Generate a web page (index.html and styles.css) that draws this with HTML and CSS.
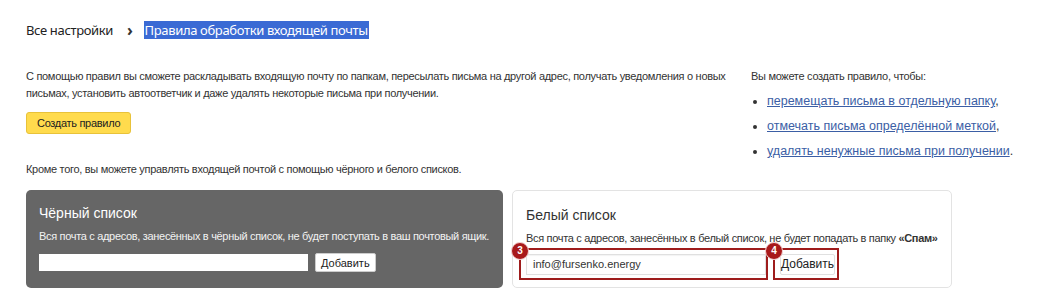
FILE: index.html
```html
<!DOCTYPE html>
<html lang="ru">
<head>
    <meta charset="UTF-8">
    <title>Правила обработки входящей почты</title>
    <link rel="stylesheet" href="styles.css">
</head>
<body>
    <div class="page">
        <div class="crumbs">
            <span class="crumb">Все настройки</span>
            <span class="crumb-sep">›</span>
            <span class="crumb-current">Правила обработки входящей почты</span>
        </div>

        <div class="intro">
            <div class="intro-main">
                <p class="text">С помощью правил вы сможете раскладывать входящую почту по папкам, пересылать письма на другой адрес, получать уведомления о новых письмах, установить автоответчик и даже удалять некоторые письма при получении.</p>
                <button class="create-btn">Создать правило</button>
                <p class="text lists-note">Кроме того, вы можете управлять входящей почтой с помощью чёрного и белого списков.</p>
            </div>
            <div class="intro-side">
                <p class="text">Вы можете создать правило, чтобы:</p>
                <ul class="rule-list">
                    <li><a href="#">перемещать письма в отдельную папку</a>,</li>
                    <li><a href="#">отмечать письма определённой меткой</a>,</li>
                    <li><a href="#">удалять ненужные письма при получении</a>.</li>
                </ul>
            </div>
        </div>

        <div class="lists">
            <div class="list-box black">
                <h2 class="list-title">Чёрный список</h2>
                <p class="list-desc">Вся почта с адресов, занесённых в чёрный список, не будет поступать в ваш почтовый ящик.</p>
                <div class="list-form">
                    <input class="list-input black-input" type="text">
                    <button class="add-btn">Добавить</button>
                </div>
            </div>
            <div class="list-box white">
                <h2 class="list-title">Белый список</h2>
                <p class="list-desc">Вся почта с адресов, занесённых в белый список, не будет попадать в папку <b>«Спам»</b></p>
                <div class="list-form">
                    <div class="mark mark-input">
                        <span class="badge">3</span>
                        <input class="list-input white-input" type="text" value="info@fursenko.energy">
                    </div>
                    <div class="mark mark-btn">
                        <span class="badge">4</span>
                        <button class="add-btn white-add">Добавить</button>
                    </div>
                </div>
            </div>
        </div>
    </div>
</body>
</html>
```

FILE: styles.css
```css
body {
    margin: 0;
    background: #fff;
    color: #333;
    font-family: "Liberation Sans", Arial, sans-serif;
}
.page {
    padding: 20px 0 0 26px;
}
.crumbs {
    display: flex;
    align-items: center;
    font-family: "Noto Sans", sans-serif;
    font-size: 13px;
    letter-spacing: -0.35px;
    color: #222;
    height: 20px;
}
.crumb-sep {
    margin: 0 11px 0 14px;
    font-size: 16px;
    font-weight: 700;
    color: #333;
}
.crumb-current {
    background: #3a6ad4;
    color: #fff;
    padding: 0 1px;
    line-height: 18px;
}
.intro {
    display: flex;
    margin-top: 28px;
}
.intro-main {
    width: 725px;
}
.text {
    margin: 0;
    font-size: 11px;
    letter-spacing: -0.3px;
    line-height: 17px;
    color: #333;
}
.create-btn {
    margin-top: 10px;
    height: 22px;
    padding: 0 10px;
    background: #ffdb4d;
    border: 1px solid #e8c23a;
    border-radius: 3px;
    font-family: "Liberation Sans", Arial, sans-serif;
    font-size: 11px;
    letter-spacing: -0.3px;
    color: #222;
}
.lists-note {
    margin-top: 27px;
}
.rule-list {
    margin: 4px 0 0;
    padding-left: 16px;
}
.rule-list li {
    font-size: 12.5px;
    line-height: 25px;
    color: #333;
}
.rule-list a {
    color: #3b5ea5;
}
.lists {
    display: flex;
    gap: 9px;
    margin-top: 12px;
}
.list-box {
    box-sizing: border-box;
    height: 98px;
    border-radius: 5px;
    padding: 0 13px;
}
.black {
    width: 477px;
    background: #666;
    color: #fff;
    padding-top: 13px;
}
.white {
    width: 440px;
    border: 1px solid #e3e3e3;
    color: #333;
    padding-top: 14px;
}
.list-title {
    margin: 0;
    font-size: 14px;
    font-weight: 400;
    line-height: 20px;
}
.list-desc {
    margin: 6px 0 0;
    font-size: 11px;
    letter-spacing: -0.32px;
    line-height: 14px;
    white-space: nowrap;
}
.black .list-desc {
    color: #f2f2f2;
}
.list-form {
    display: flex;
    align-items: center;
    margin-top: 10px;
}
.white .list-form {
    margin-top: 3px;
    margin-left: -7px;
}
.list-input {
    box-sizing: border-box;
    border: 1px solid #ccc;
    font-family: "Liberation Sans", Arial, sans-serif;
    font-size: 11px;
    padding: 0 6px;
    color: #333;
}
.black-input {
    width: 269px;
    height: 17px;
    border: none;
}
.white-input {
    width: 240px;
    height: 21px;
    border-color: #e0e0e0;
    box-shadow: inset 0 1px 1px rgba(0, 0, 0, 0.05);
}
.add-btn {
    height: 19px;
    padding: 0 5px;
    margin-left: 7px;
    background: #fff;
    border: 1px solid #ccc;
    border-radius: 2px;
    font-family: "Liberation Sans", Arial, sans-serif;
    font-size: 11px;
    color: #222;
}
.white-add {
    width: 55px;
    height: 21px;
    margin-left: 0;
    padding: 0;
    border-color: #e0e0e0;
    font-size: 12px;
}
.mark {
    position: relative;
    box-sizing: border-box;
    height: 32px;
    border: 2px solid #9e1c1c;
    display: flex;
    align-items: center;
    padding-left: 5px;
}
.mark-input {
    width: 249px;
}
.mark-btn {
    width: 66px;
    margin-left: 5px;
}
.badge {
    position: absolute;
    left: -10px;
    top: -8px;
    width: 16px;
    height: 16px;
    border-radius: 50%;
    background: #a8191b;
    border: 1px solid #f4d6d6;
    color: #fff;
    font-size: 10px;
    font-weight: 700;
    line-height: 16px;
    text-align: center;
}
```
